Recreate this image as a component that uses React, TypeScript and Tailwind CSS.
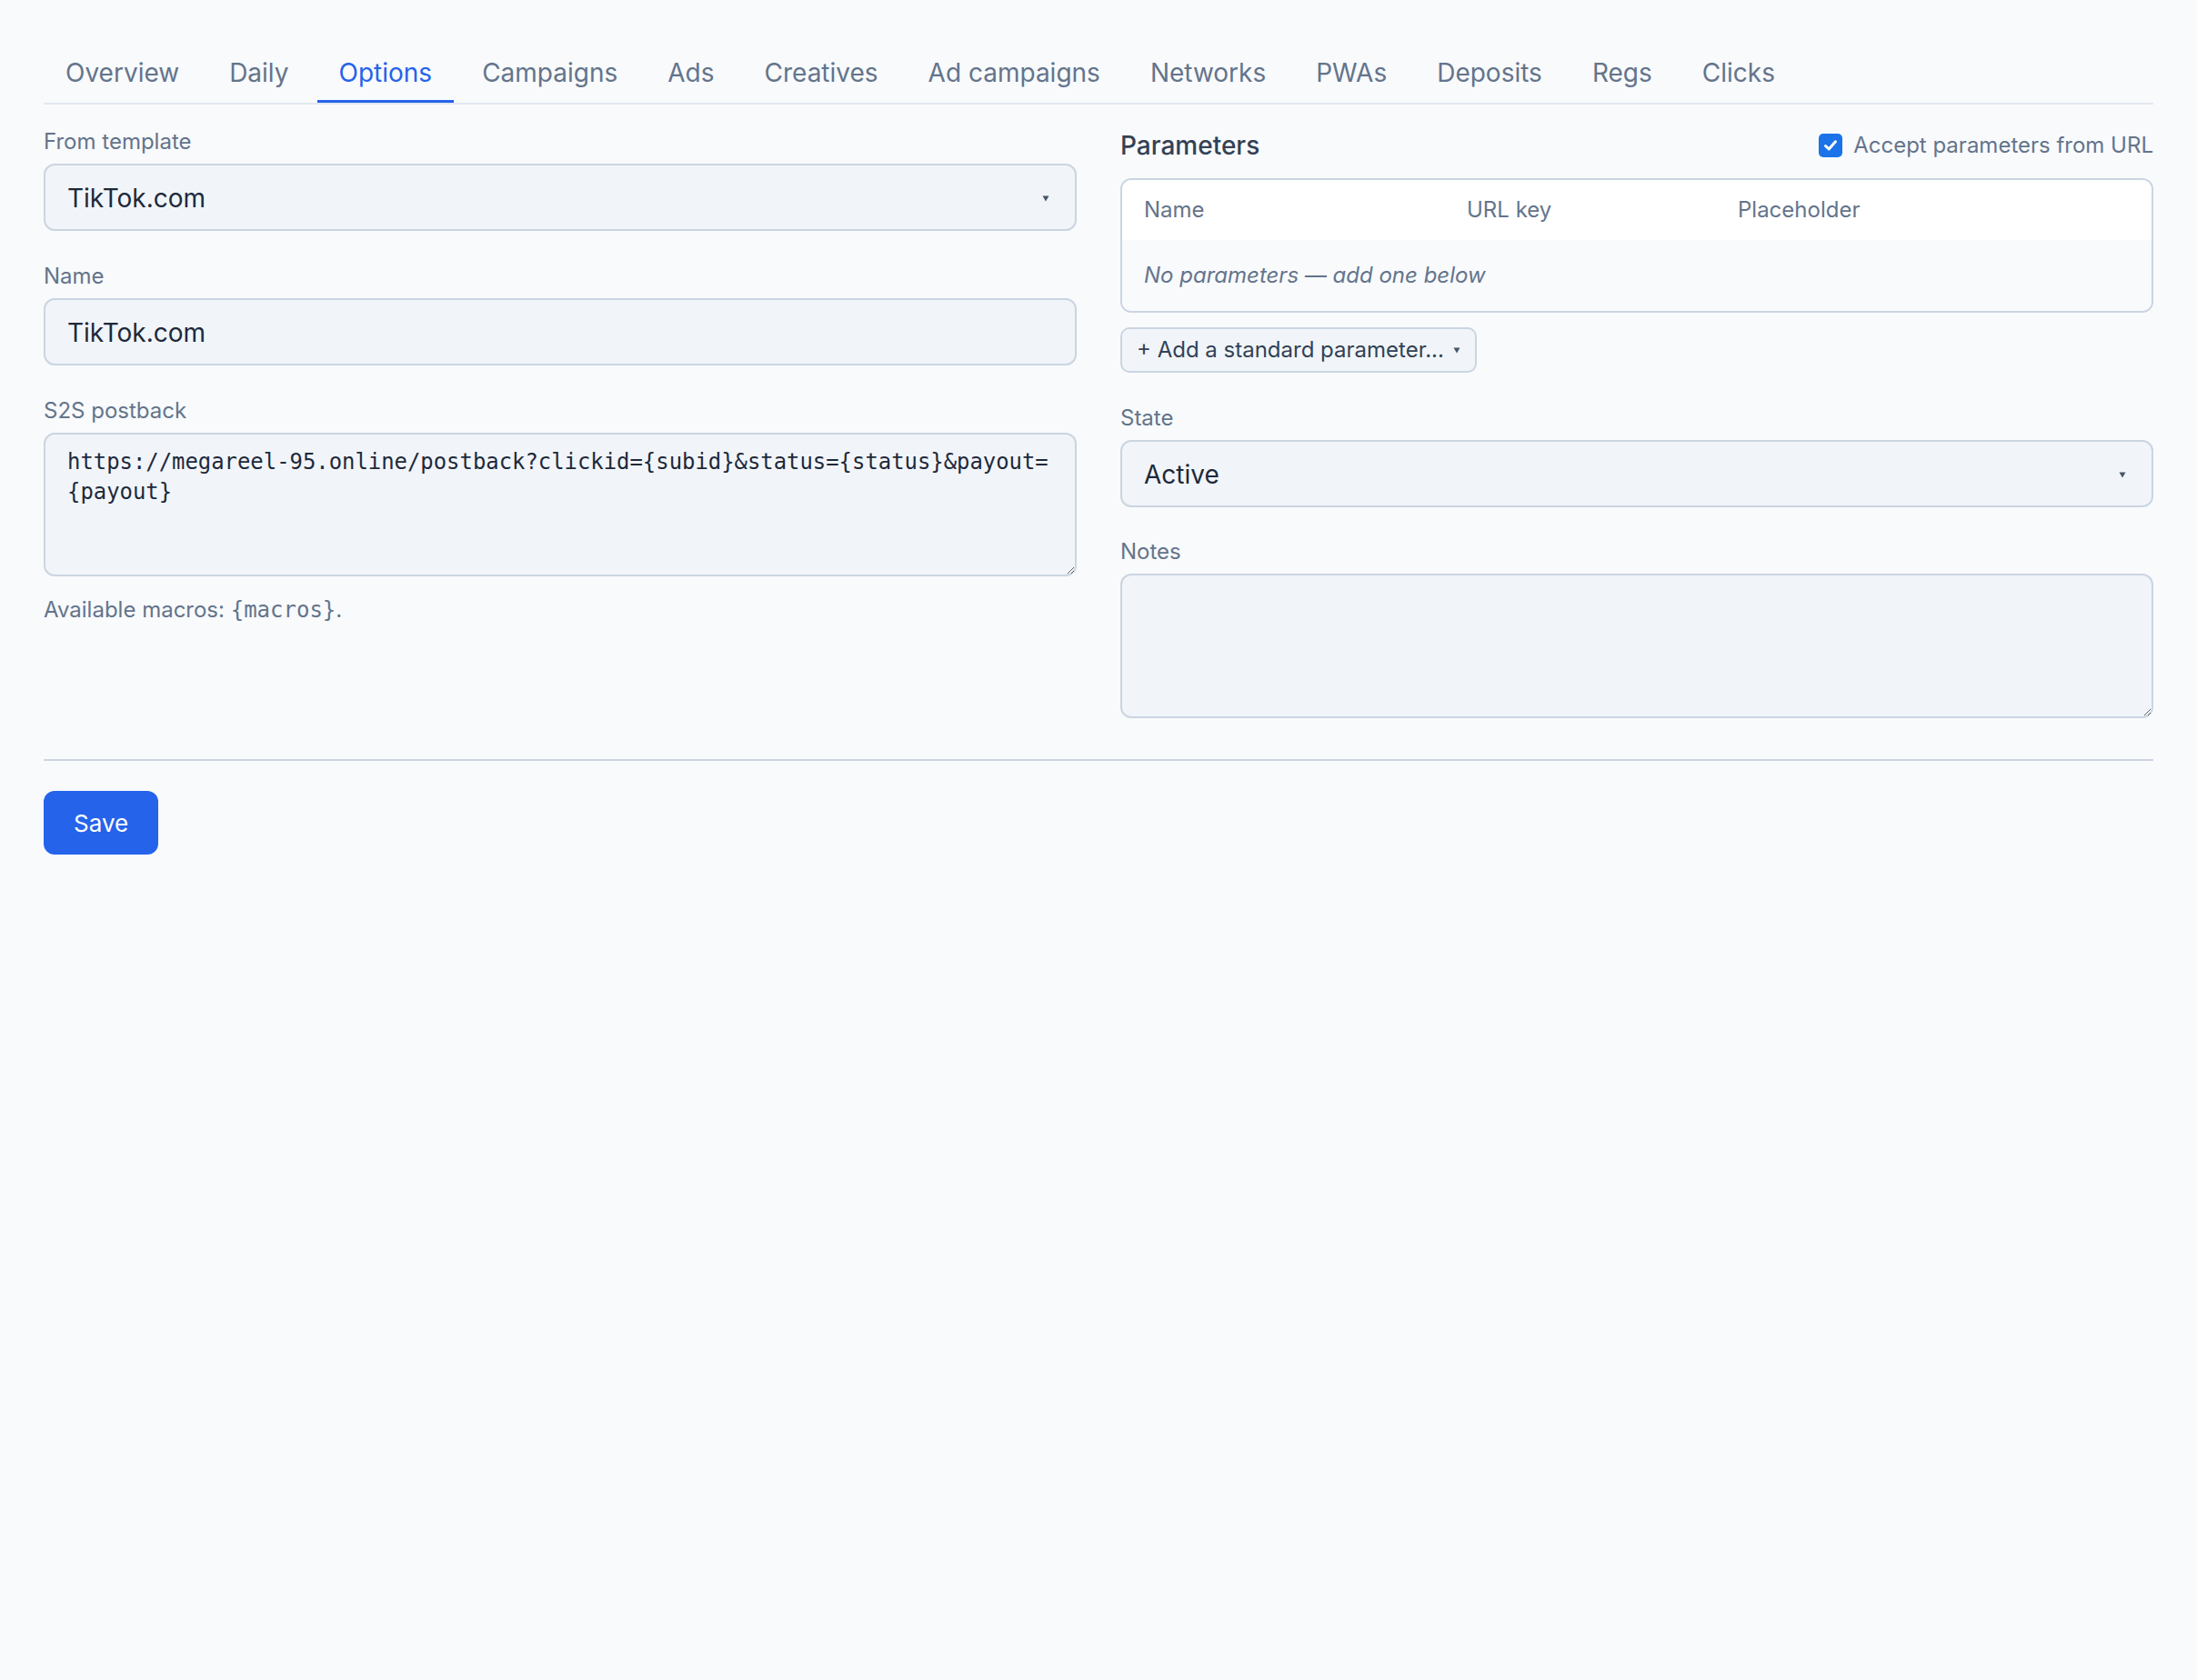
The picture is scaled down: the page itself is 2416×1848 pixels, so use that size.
import React from "react";

const tabs = [
  "Overview",
  "Daily",
  "Options",
  "Campaigns",
  "Ads",
  "Creatives",
  "Ad campaigns",
  "Networks",
  "PWAs",
  "Deposits",
  "Regs",
  "Clicks",
];

function Caret() {
  return (
    <svg width="8" height="7" viewBox="0 0 8 7" className="shrink-0">
      <path d="M0.5 0.5 L7.5 0.5 L4 6.5 Z" fill="#475569" />
    </svg>
  );
}

function Label({ children }: { children: React.ReactNode }) {
  return (
    <div className="mb-[7px] text-[24px] leading-[34px] text-[#64748b]">
      {children}
    </div>
  );
}

function SelectBox({ value }: { value: string }) {
  return (
    <div className="flex h-[74px] items-center justify-between rounded-[12px] border-2 border-[#cbd5e1] bg-[#f1f5f9] pl-[24px] pr-[28px] pt-[2px] text-[28px] text-[#1e293b]">
      <span>{value}</span>
      <Caret />
    </div>
  );
}

export default function App() {
  const mono = { fontFamily: '"DejaVu Sans Mono", "Liberation Mono", monospace' };
  return (
    <div
      className="min-h-[1848px] bg-[#f8fafc] px-12 pt-12"
      style={{ fontFamily: 'Inter, "Noto Sans", sans-serif' }}
    >
      {/* tab strip */}
      <nav className="flex gap-[7px] border-b-2 border-[#e2e8f0]">
        {tabs.map((t) => (
          <div
            key={t}
            className={
              t === "Options"
                ? "border-b-[3px] border-[#2563eb] px-6 pt-3 pb-[10px] text-[28px] leading-[40px] text-[#2563eb]"
                : "border-b-[3px] border-transparent px-6 pt-3 pb-[10px] text-[28px] leading-[40px] text-[#64748b]"
            }
          >
            {t}
          </div>
        ))}
      </nav>

      <div className="mt-[24px] grid grid-cols-2 gap-12">
        {/* left column */}
        <div className="flex flex-col gap-[33px]">
          <div>
            <Label>From template</Label>
            <SelectBox value="TikTok.com" />
          </div>
          <div>
            <Label>Name</Label>
            <div className="flex h-[74px] items-center rounded-[12px] border-2 border-[#cbd5e1] bg-[#f1f5f9] pl-[24px] pt-[2px] text-[28px] text-[#1e293b]">
              TikTok.com
            </div>
          </div>
          <div>
            <Label>S2S postback</Label>
            <textarea
              readOnly
              defaultValue="https://megareel-95.online/postback?clickid={subid}&status={status}&payout={payout}"
              className="block h-[158px] w-full rounded-[12px] border-2 border-[#cbd5e1] bg-[#f1f5f9] pt-[14px] pl-[24px] pr-[14px] text-[23.9px] leading-[33px] text-[#1e293b] outline-none"
              style={mono}
            />
            <div className="mt-[20px] text-[24px] leading-[34px] text-[#64748b]">
              Available macros: <span style={mono} className="text-[24px]">{"{macros}"}</span>.
            </div>
          </div>
        </div>

        {/* right column */}
        <div className="flex flex-col">
          <div className="flex h-[42px] items-center justify-between">
            <div className="text-[28px] font-medium text-[#334155]">Parameters</div>
            <label className="flex items-center gap-[12px] text-[24px] text-[#64748b]">
              <span className="flex h-[26px] w-[26px] items-center justify-center rounded-[5px] bg-[#1a73e8]">
                <svg width="18" height="18" viewBox="0 0 18 18">
                  <path
                    d="M3.5 9.5 L7.2 13 L14.5 4.8"
                    fill="none"
                    stroke="#fff"
                    strokeWidth="3"
                    strokeLinecap="round"
                    strokeLinejoin="round"
                  />
                </svg>
              </span>
              Accept parameters from URL
            </label>
          </div>

          <div className="mt-[15px] overflow-hidden rounded-[12px] border-2 border-[#cbd5e1]">
            <div className="grid h-[66px] grid-cols-[355px_298px_1fr] items-center bg-white pl-[24px] text-[24px] text-[#64748b]">
              <span>Name</span>
              <span>URL key</span>
              <span>Placeholder</span>
            </div>
            <div className="flex h-[78px] items-center bg-[#f8fafc] pl-[24px] text-[24px] italic text-[#64748b]">
              No parameters — add one below
            </div>
          </div>

          <div className="mt-[16px]">
            <div className="inline-flex h-[50px] items-center gap-[10px] rounded-[10px] border-2 border-[#cbd5e1] bg-[#f1f5f9] pl-[16px] pr-[16px] text-[24px] text-[#334155]">
              <span>+ Add a standard parameter...</span>
              <Caret />
            </div>
          </div>

          <div className="mt-[33px]">
            <Label>State</Label>
            <SelectBox value="Active" />
          </div>

          <div className="mt-[32px]">
            <Label>Notes</Label>
            <textarea
              readOnly
              className="block h-[159px] w-full rounded-[12px] border-2 border-[#cbd5e1] bg-[#f1f5f9] outline-none"
            />
          </div>
        </div>
      </div>

      <div className="mt-[45px] border-t-2 border-[#cbd5e1] pt-[33px]">
        <button className="h-[70px] rounded-[12px] bg-[#2563eb] px-[33px] text-[26px] text-white">
          Save
        </button>
      </div>
    </div>
  );
}
